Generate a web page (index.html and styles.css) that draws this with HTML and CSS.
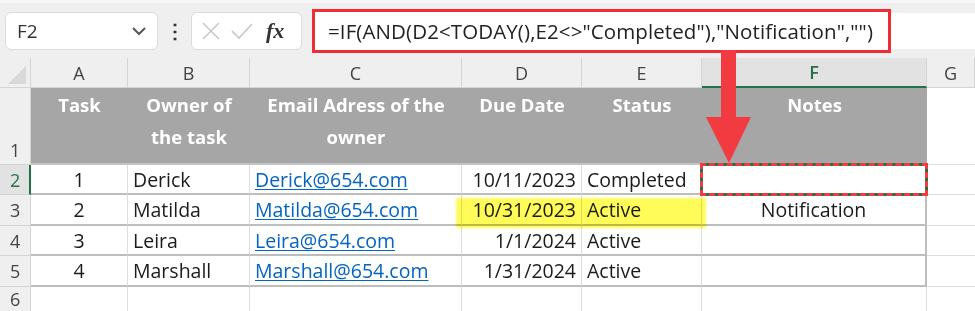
FILE: index.html
```html
<!DOCTYPE html>
<html lang="en">
<head>
  <meta charset="UTF-8" />
  <title>Excel - Notes formula</title>
  <link rel="stylesheet" href="styles.css">
</head>
<body>
  <div class="bar">
    <div class="namebox">
      <span>F2</span>
      <svg width="16" height="10" viewBox="0 0 16 10"><path d="M2 2 L8 8 L14 2" fill="none" stroke="#555" stroke-width="2"/></svg>
    </div>
    <div class="dots">&#8942;</div>
    <div class="fxbox">
      <svg width="22" height="22" viewBox="0 0 22 22"><path d="M3 3 L19 19 M19 3 L3 19" stroke="#c8c8c8" stroke-width="1.6"/></svg>
      <svg width="24" height="22" viewBox="0 0 24 22"><path d="M2 11 L9 18 L22 4" fill="none" stroke="#c8c8c8" stroke-width="1.6"/></svg>
      <span class="fx">fx</span>
    </div>
    <div class="formula">=IF(AND(D2&lt;TODAY(),E2&lt;&gt;"Completed"),"Notification","")</div>
    <div class="formula-rest"></div>
  </div>

  <div class="sheet">
    <div class="corner"><div class="tri"></div></div>
    <div class="colhead">A</div>
    <div class="colhead">B</div>
    <div class="colhead">C</div>
    <div class="colhead">D</div>
    <div class="colhead">E</div>
    <div class="colhead active">F</div>
    <div class="colhead">G</div>

    <div class="rowhead tall">1</div>
    <div class="th">Task</div>
    <div class="th">Owner of<br>the task</div>
    <div class="th">Email Adress of the<br>owner</div>
    <div class="th">Due Date</div>
    <div class="th">Status</div>
    <div class="th">Notes</div>
    <div class="cell blank"></div>

    <div class="rowhead active">2</div>
    <div class="cell t num">1</div>
    <div class="cell t">Derick</div>
    <div class="cell t"><a>Derick@654.com</a></div>
    <div class="cell t right">10/11/2023</div>
    <div class="cell t">Completed</div>
    <div class="cell t last"></div>
    <div class="cell blank"></div>

    <div class="rowhead">3</div>
    <div class="cell t num">2</div>
    <div class="cell t">Matilda</div>
    <div class="cell t"><a>Matilda@654.com</a></div>
    <div class="cell t right">10/31/2023</div>
    <div class="cell t">Active</div>
    <div class="cell t last num">Notification</div>
    <div class="cell blank"></div>

    <div class="rowhead">4</div>
    <div class="cell t num">3</div>
    <div class="cell t">Leira</div>
    <div class="cell t"><a>Leira@654.com</a></div>
    <div class="cell t right">1/1/2024</div>
    <div class="cell t">Active</div>
    <div class="cell t last"></div>
    <div class="cell blank"></div>

    <div class="rowhead">5</div>
    <div class="cell t num">4</div>
    <div class="cell t">Marshall</div>
    <div class="cell t"><a>Marshall@654.com</a></div>
    <div class="cell t right">1/31/2024</div>
    <div class="cell t">Active</div>
    <div class="cell t last"></div>
    <div class="cell blank"></div>

    <div class="rowhead short">6</div>
    <div class="cell"></div>
    <div class="cell"></div>
    <div class="cell"></div>
    <div class="cell"></div>
    <div class="cell"></div>
    <div class="cell"></div>
    <div class="cell blank"></div>

    <!-- overlays -->
    <div class="marker"></div>
    <div class="selection"></div>
  </div>

  <svg class="arrow" width="50" height="115" viewBox="0 0 50 115">
    <rect x="17" y="0" width="15" height="70" fill="#f23b40"/>
    <path d="M2 67 L47 67 L25 113 Z" fill="#f23b40"/>
  </svg>
</body>
</html>
```

FILE: styles.css
```css
body {
  margin: 0;
  width: 975px;
  height: 311px;
  overflow: hidden;
  background: #fff;
  font-family: "Open Sans", Lato, sans-serif;
  color: #1b1b1b;
  position: relative;
}

/* formula bar */
.bar {
  height: 58px;
  background: #efefef;
  display: flex;
  align-items: center;
  padding-left: 5px;
  box-sizing: border-box;
  border-top: 3px solid #f7f7f7;
}
.namebox {
  width: 153px;
  height: 38px;
  box-sizing: border-box;
  background: #fff;
  border: 1px solid #dcdcdc;
  border-radius: 6px;
  display: flex;
  align-items: center;
  justify-content: space-between;
  padding: 0 10px 0 11px;
  font-size: 19px;
  color: #333;
}
.dots {
  width: 33px;
  text-align: center;
  font-size: 20px;
  font-weight: bold;
  color: #333;
}
.fxbox {
  width: 111px;
  height: 38px;
  box-sizing: border-box;
  background: #fff;
  border: 1px solid #dcdcdc;
  border-radius: 6px;
  display: flex;
  align-items: center;
  gap: 8px;
  padding-left: 8px;
}
.fx {
  font-family: "Liberation Serif", serif;
  font-style: italic;
  font-weight: bold;
  font-size: 22px;
  color: #333;
  margin-left: 4px;
}
.formula {
  margin-left: 10px;
  width: 579px;
  height: 44px;
  box-sizing: border-box;
  border: 3px solid #f02b33;
  background: #fff;
  font-size: 20.5px;
  letter-spacing: 0.1px;
  line-height: 38px;
  padding-left: 13px;
  color: #222;
  white-space: nowrap;
}
.formula-rest {
  flex: 1;
  height: 36px;
  background: #fff;
}

/* grid */
.sheet {
  position: relative;
  display: grid;
  grid-template-columns: 31px 97px 122px 212px 120px 120px 225px 48px;
  grid-template-rows: 30px 77px 30px 31px 30px 31px 30px;
  font-size: 19.5px;
}
.corner {
  background: #efefef;
  border-right: 1px solid #d4d4d4;
  border-bottom: 1px solid #d4d4d4;
  position: relative;
}
.tri {
  position: absolute;
  right: 4px;
  bottom: 3px;
  width: 0;
  height: 0;
  border-left: 18px solid transparent;
  border-bottom: 18px solid #d9d9d9;
}
.colhead {
  background: #efefef;
  border-right: 1px solid #d4d4d4;
  border-bottom: 1px solid #d4d4d4;
  display: flex;
  align-items: center;
  justify-content: center;
  color: #444;
  font-size: 18px;
}
.colhead.active {
  background: #e2e2e2;
  color: #217346;
  font-weight: 600;
  border-bottom: 2px solid #217346;
}
.rowhead {
  background: #efefef;
  border-right: 1px solid #d4d4d4;
  border-bottom: 1px solid #d4d4d4;
  color: #444;
  font-size: 18px;
  padding-left: 10px;
  display: flex;
  align-items: center;
}
.rowhead.tall {
  align-items: flex-end;
  padding-bottom: 2px;
}
.rowhead.short {
  align-items: flex-start;
  line-height: 22px;
  padding-top: 1px;
}
.rowhead.active {
  color: #217346;
  background: #e2e2e2;
  border-right: 2px solid #217346;
}
.th {
  background: #a6a6a6;
  color: #fff;
  font-weight: bold;
  font-size: 18.5px;
  text-align: center;
  line-height: 32px;
  padding-top: 1px;
  border-bottom: 2px solid #c4c4c4;
}
.cell {
  border-right: 1px solid #dedede;
  border-bottom: 1px solid #dedede;
  display: flex;
  align-items: center;
  padding: 0 5px;
  white-space: nowrap;
}
.cell.t {
  border-bottom: 2px solid #bdbdbd;
}
.cell.last {
  border-right: 2px solid #bdbdbd;
}
.cell.num {
  justify-content: center;
}
.cell.right {
  justify-content: flex-end;
}
.cell.blank {
  border-right: none;
}
a {
  color: #0563c1;
  text-decoration: underline;
  text-underline-offset: 2px;
}

/* overlays */
.marker {
  position: absolute;
  left: 456px;
  top: 140px;
  width: 250px;
  height: 30px;
  background: rgba(255, 250, 60, 0.85);
  filter: blur(1px);
  mix-blend-mode: multiply;
}
.selection {
  position: absolute;
  left: 700px;
  top: 105px;
  width: 228px;
  height: 33px;
  box-sizing: border-box;
  border: 3px solid #217346;
}
.selection::before {
  content: "";
  position: absolute;
  inset: -3px;
  border: 3px dashed #f23b40;
}
.arrow {
  position: absolute;
  left: 704px;
  top: 50px;
}
```
